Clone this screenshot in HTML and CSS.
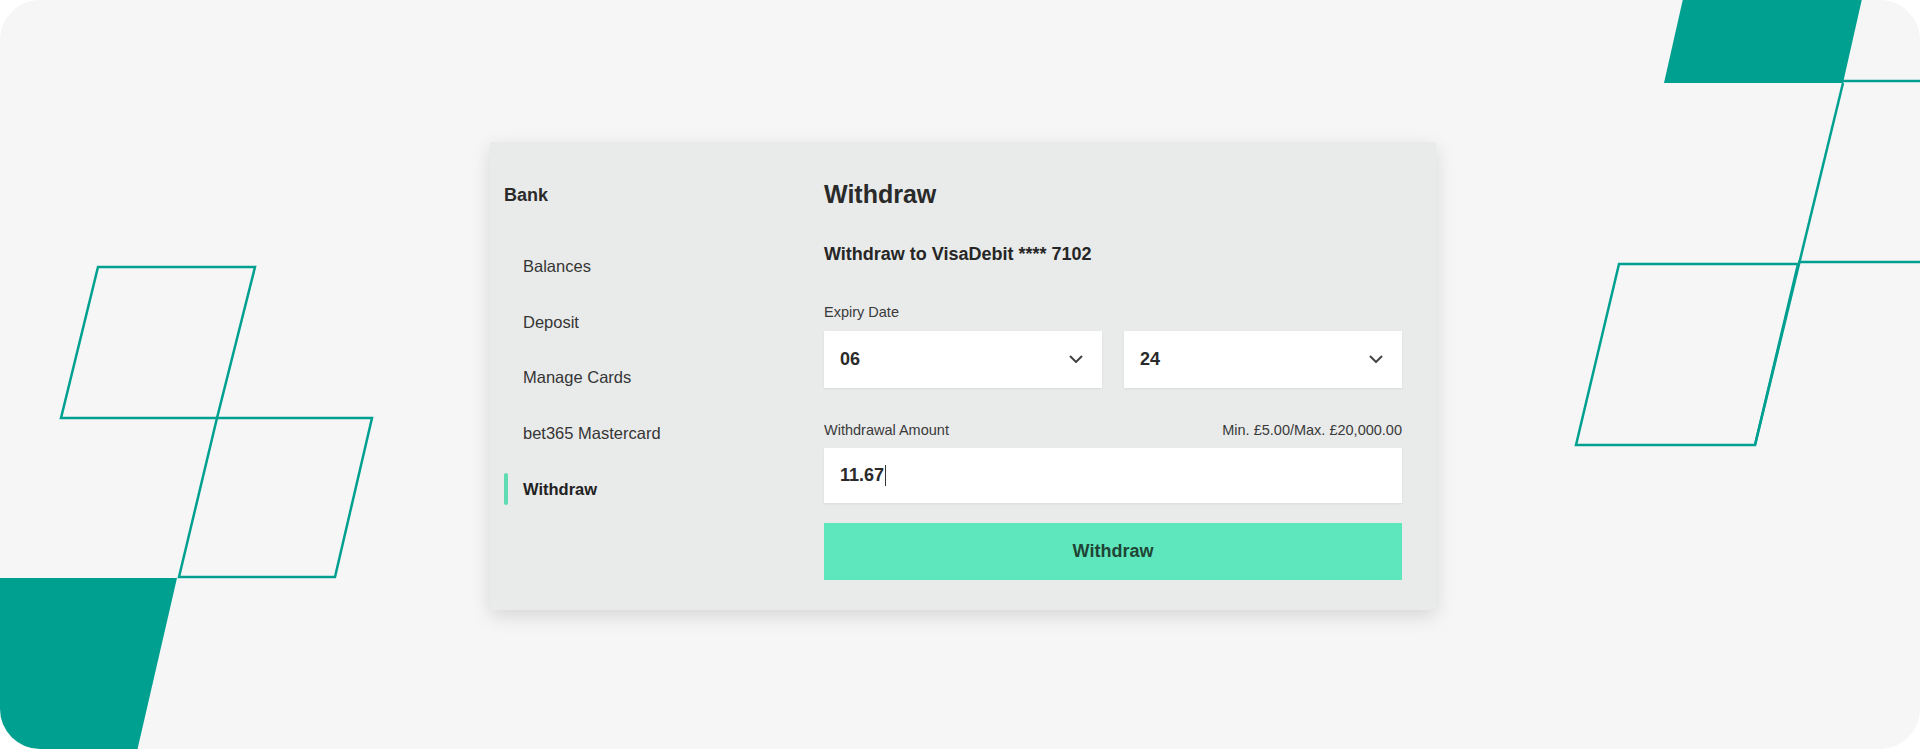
FILE: index.html
```html
<!DOCTYPE html>
<html lang="en">
<head>
    <meta charset="UTF-8">
    <meta name="viewport" content="width=device-width, initial-scale=1.0">
    <title>Bank - Withdraw</title>
    <link rel="stylesheet" href="styles.css">
</head>
<body>

    <div class="stage">
        <svg class="decor" viewBox="0 0 1920 749" preserveAspectRatio="none" aria-hidden="true">
            <!-- left group -->
            <polygon class="outline" points="98,267 255,267 217,418 61,418" />
            <polygon class="outline" points="217,418 372,418 335,577 179,577" />
            <polygon class="solid" points="-10,578 177,578 135,760 -10,760" />
            <!-- right group -->
            <polygon class="solid" points="1685,-10 1864,-10 1843,83 1664,83" />
            <line class="outline" x1="1843" y1="81" x2="1930" y2="81" />
            <line class="outline" x1="1843" y1="83" x2="1755" y2="445" />
            <line class="outline" x1="1798" y1="262" x2="1930" y2="262" />
            <polygon class="outline" points="1619,264 1798,264 1755,445 1576,445" />
        </svg>

        <div class="card">
            <div class="sidebar">
                <div class="sidebar-title">Bank</div>
                <nav class="nav">
                    <a class="nav-item" href="#">Balances</a>
                    <a class="nav-item" href="#">Deposit</a>
                    <a class="nav-item" href="#">Manage Cards</a>
                    <a class="nav-item" href="#">bet365 Mastercard</a>
                    <a class="nav-item active" href="#">Withdraw</a>
                </nav>
            </div>

            <div class="content">
                <h1 class="page-title">Withdraw</h1>
                <div class="subtitle">Withdraw to VisaDebit **** 7102</div>

                <div class="label">Expiry Date</div>
                <div class="selects">
                    <div class="select">
                        <span>06</span>
                        <svg class="chevron" viewBox="0 0 14 8"><polyline points="1,1 7,7 13,1" /></svg>
                    </div>
                    <div class="select">
                        <span>24</span>
                        <svg class="chevron" viewBox="0 0 14 8"><polyline points="1,1 7,7 13,1" /></svg>
                    </div>
                </div>

                <div class="label label-row">
                    <span>Withdrawal Amount</span>
                    <span>Min. £5.00/Max. £20,000.00</span>
                </div>
                <div class="amount">
                    <span>11.67</span><span class="caret"></span>
                </div>

                <button class="submit">Withdraw</button>
            </div>
        </div>
    </div>

</body>
</html>
```

FILE: styles.css
```css
body {
    margin: 0;
    background-color: #fff;
    font-family: 'Liberation Sans', Arial, sans-serif;
    color: #2b2b2b;
}

.stage {
    position: relative;
    width: 1920px;
    height: 749px;
    border-radius: 40px;
    background-color: #f6f6f6;
    overflow: hidden;
    display: flex;
    justify-content: center;
    align-items: center;
}

.decor {
    position: absolute;
    left: 0;
    top: 0;
    width: 1920px;
    height: 749px;
}

.decor .outline {
    fill: none;
    stroke: #00a091;
    stroke-width: 2.5;
}

.decor .solid {
    fill: #00a091;
}

.card {
    position: relative;
    width: 946px;
    height: 468px;
    margin-left: 6px;
    margin-top: 2px;
    box-sizing: border-box;
    background-color: #e9ebea;
    box-shadow: 0 6px 18px rgba(0, 0, 0, 0.13);
    display: grid;
    grid-template-columns: 334px 1fr;
}

/* sidebar */

.sidebar {
    padding: 41px 0 0 14px;
}

.sidebar-title {
    font-size: 18px;
    line-height: 24px;
    font-weight: 700;
    color: #2a2a2a;
}

.nav {
    display: flex;
    flex-direction: column;
    margin-top: 32px;
}

.nav-item {
    display: flex;
    align-items: center;
    height: 55.7px;
    padding-left: 19px;
    font-size: 16.5px;
    color: #353535;
    text-decoration: none;
}

.nav-item.active {
    font-weight: 700;
    color: #222;
}

.nav-item.active::before {
    content: "";
    width: 4px;
    height: 32px;
    margin-left: -19px;
    margin-right: 15px;
    border-radius: 2px;
    background-color: #5edbb2;
}

/* main */

.content {
    padding: 37px 34px 0 0;
}

.page-title {
    margin: 0;
    font-size: 25px;
    line-height: 30px;
    font-weight: 700;
    color: #2a2a2a;
}

.subtitle {
    margin-top: 34px;
    font-size: 18px;
    line-height: 22px;
    font-weight: 700;
    color: #262626;
}

.label {
    margin-top: 38px;
    font-size: 14.5px;
    line-height: 18px;
    color: #3a3a3a;
}

.label-row {
    margin-top: 33px;
    display: flex;
    justify-content: space-between;
}

.selects {
    margin-top: 10px;
    display: grid;
    grid-template-columns: 1fr 1fr;
    gap: 22px;
}

.select {
    height: 57px;
    background-color: #fff;
    box-shadow: 0 1px 2px rgba(0, 0, 0, 0.07);
    display: flex;
    align-items: center;
    justify-content: space-between;
    padding: 0 19px 0 16px;
    font-size: 18px;
    font-weight: 700;
    color: #2a2a2a;
}

.chevron {
    width: 14px;
    height: 8px;
}

.chevron polyline {
    fill: none;
    stroke: #444;
    stroke-width: 2;
}

.amount {
    margin-top: 9px;
    height: 55px;
    background-color: #fff;
    box-shadow: 0 1px 2px rgba(0, 0, 0, 0.07);
    display: flex;
    align-items: center;
    padding-left: 16px;
    font-size: 18px;
    font-weight: 700;
    color: #2a2a2a;
}

.caret {
    width: 1px;
    height: 21px;
    margin-left: 1px;
    background-color: #333;
}

.submit {
    display: block;
    width: 100%;
    height: 57px;
    margin-top: 20px;
    border: none;
    background-color: #5ee6bd;
    font-family: inherit;
    font-size: 18px;
    font-weight: 700;
    color: #1f4536;
    cursor: pointer;
}
```
